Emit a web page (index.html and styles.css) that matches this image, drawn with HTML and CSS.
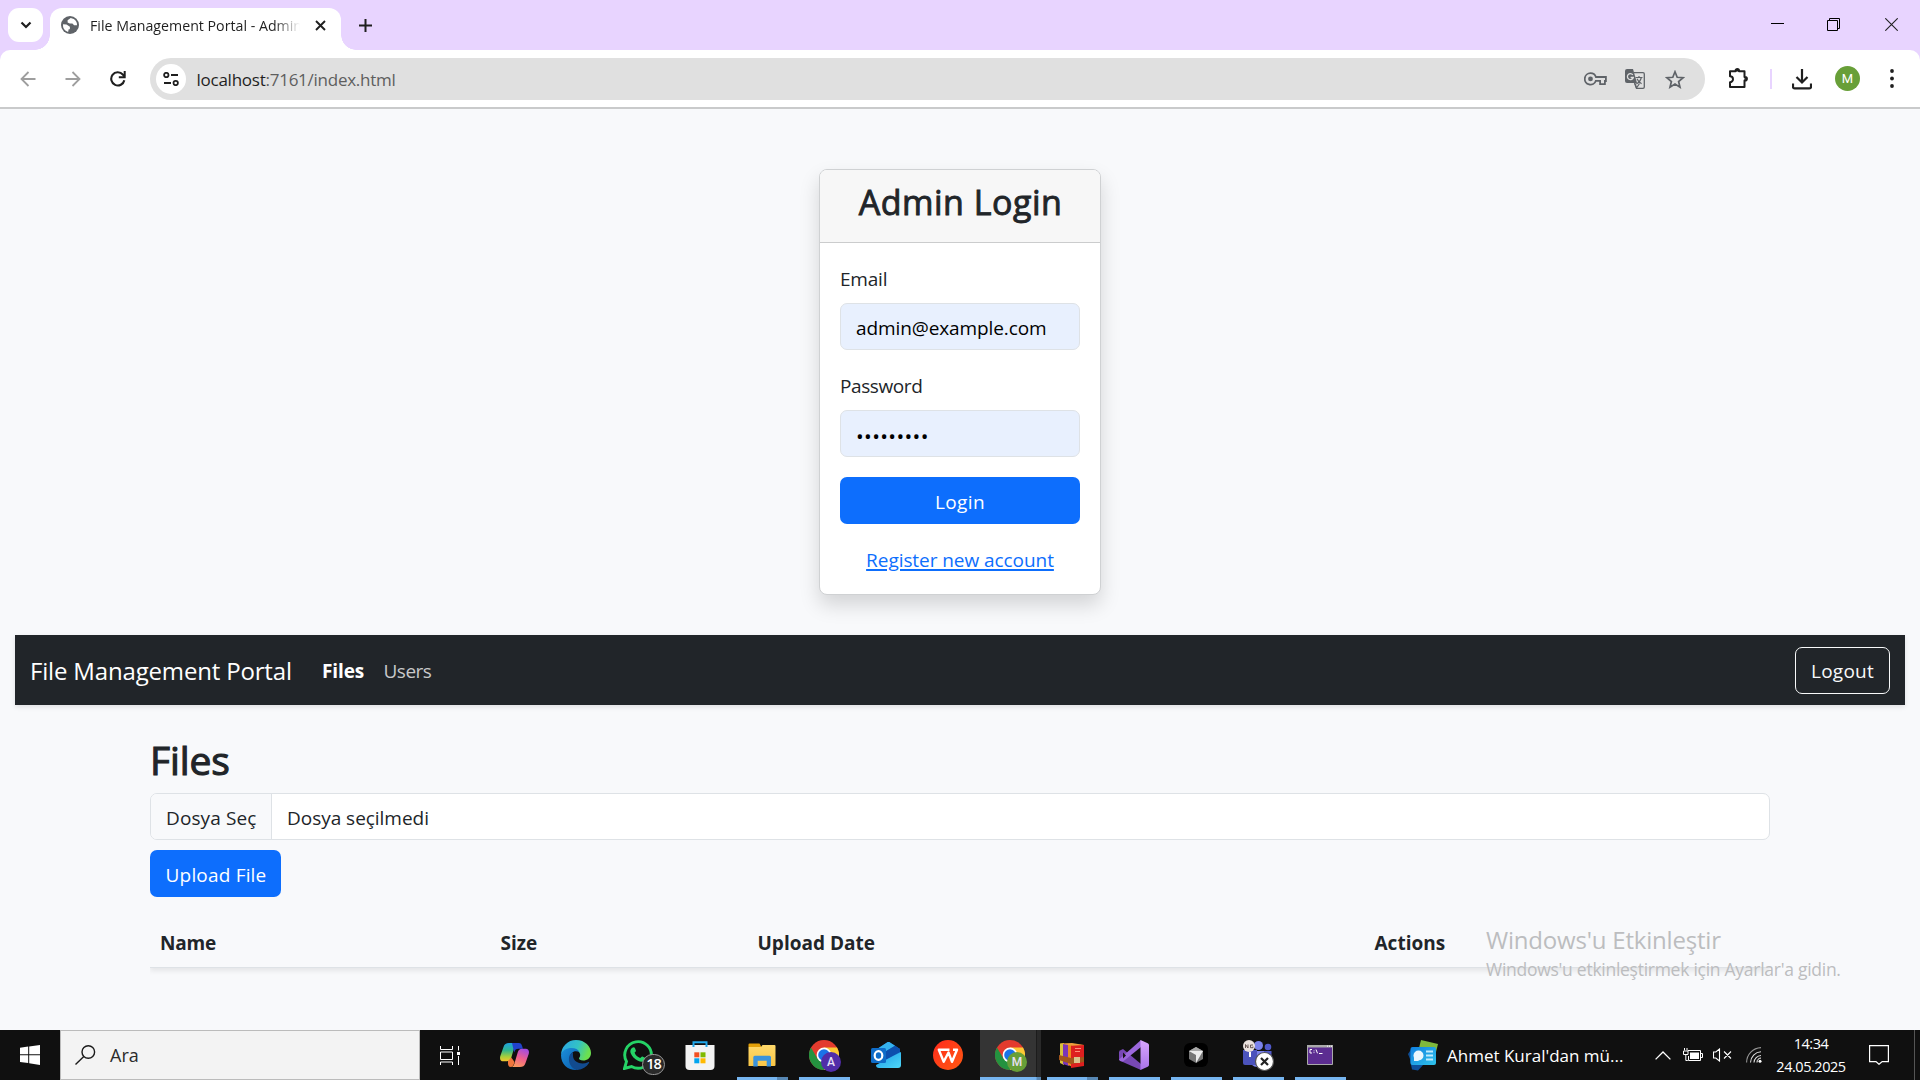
FILE: index.html
```html
<!DOCTYPE html>
<html lang="tr">
<head>
<meta charset="utf-8">
<title>File Management Portal - Admin</title>
<link rel="stylesheet" href="styles.css">
</head>
<body>
<svg class="defs" width="0" height="0" aria-hidden="true">
  <defs>
    <linearGradient id="cop1" x1="0" y1="0" x2="0" y2="1"><stop offset="0" stop-color="#1fa2e0"/><stop offset=".4" stop-color="#2fb58e"/><stop offset=".75" stop-color="#a8cf3a"/><stop offset="1" stop-color="#f5c52c"/></linearGradient>
    <linearGradient id="cop2" x1=".7" y1="0" x2=".3" y2="1"><stop offset="0" stop-color="#a44be0"/><stop offset=".5" stop-color="#ee5f8d"/><stop offset="1" stop-color="#fb9a5b"/></linearGradient>
    <linearGradient id="edge1" x1="0" y1="0" x2="1" y2=".3"><stop offset="0" stop-color="#2aa3e8"/><stop offset=".6" stop-color="#33c3c4"/><stop offset="1" stop-color="#6be04f"/></linearGradient>
    <linearGradient id="edge2" x1="0" y1="0" x2="1" y2="1"><stop offset="0" stop-color="#1b8fdc"/><stop offset="1" stop-color="#0b5cab"/></linearGradient>
    <linearGradient id="fold" x1="0" y1="0" x2="0" y2="1"><stop offset="0" stop-color="#ffd96b"/><stop offset="1" stop-color="#f9c646"/></linearGradient>
    <linearGradient id="wps" x1="0" y1="0" x2="1" y2="1"><stop offset="0" stop-color="#ff2a1c"/><stop offset="1" stop-color="#ff5a12"/></linearGradient>
    <linearGradient id="out" x1="0" y1="0" x2="1" y2="1"><stop offset="0" stop-color="#1b9be8"/><stop offset="1" stop-color="#4fd8f8"/></linearGradient>
    <linearGradient id="vs" x1="0" y1="0" x2="0" y2="1"><stop offset="0" stop-color="#d9a6ff"/><stop offset="1" stop-color="#a873e8"/></linearGradient>
    <linearGradient id="news" x1="0" y1="0" x2="1" y2="1"><stop offset="0" stop-color="#0f7fe0"/><stop offset="1" stop-color="#30c3ea"/></linearGradient>
    <symbol id="chrome" viewBox="0 0 30 30">
      <circle cx="15" cy="15" r="15" fill="#e33b2e"/>
      <path d="M15 15 8.500 18.750 2 7.500A15 15 0 0 0 15 30l6.500-11.250z" fill="#24923f"/>
      <path d="M15 15V7.500h13A15 15 0 0 1 15 30l6.500-11.250z" fill="#fcc934"/>
      <circle cx="15" cy="15" r="7.400" fill="#fff"/><circle cx="15" cy="15" r="5.800" fill="#1a73e8"/>
    </symbol>
  </defs>
</svg>

<header class="tabstrip">
  <div class="tabsearch"><svg width="12" height="8" viewBox="0 0 12 8"><path d="M1.500 1.500 6 6l4.500-4.500" fill="none" stroke="#1f1f1f" stroke-width="2.200"/></svg></div>
  <div class="tab">
    <svg width="18" height="18" viewBox="0 0 18 18"><circle cx="9" cy="9" r="9" fill="#5f6368"/><path d="M9.700 1.900 6.600 4.200v2.200l2.200 1.200h2.600l1.700 1.700h2.900a7 7 0 0 0-3.200-6.300zM2 8.300l3.500.2 3.400 2.200v2.500H7.700l-.6 2.700A7.200 7.200 0 0 1 2 8.300z" fill="#fff"/></svg>
    <span class="tab-title">File Management Portal - Admin</span>
    <svg class="tab-close" width="11" height="11" viewBox="0 0 11 11"><path d="m1 1 9 9m0-9-9 9" stroke="#1f1f1f" stroke-width="1.900"/></svg>
  </div>
  <svg class="newtab" width="13" height="13" viewBox="0 0 13 13"><path d="M6.500 0v13M0 6.500h13" stroke="#1f1f1f" stroke-width="2"/></svg>
  <div class="wincontrols">
    <svg width="13" height="13" viewBox="0 0 13 13"><path d="M0 5.500h13" stroke="#000"/></svg>
    <svg width="13" height="13" viewBox="0 0 13 13"><path d="M.5 2.500h10v10H.5zM2.500 2.500v-2h10v10h-2" fill="none" stroke="#000"/></svg>
    <svg width="13" height="13" viewBox="0 0 13 13"><path d="m.3.300 12.400 12.400m0-12.400L.3 12.700" stroke="#222" stroke-width="1.100"/></svg>
  </div>
</header>

<div class="toolbar-wrap">
<div class="toolbar">
  <div class="navicons">
    <svg width="16" height="16" viewBox="0 0 16 16"><path d="M15.500 8H2M8.500 1 1.500 8l7 7" fill="none" stroke="#9e9e9e" stroke-width="1.800"/></svg>
    <svg width="16" height="16" viewBox="0 0 16 16"><path d="M.5 8H14M7.500 1l7 7-7 7" fill="none" stroke="#9e9e9e" stroke-width="1.800"/></svg>
    <svg width="16" height="16" viewBox="0 0 16 16"><path d="M14.300 9.200A6.600 6.600 0 1 1 12.800 3.500L14.500 5.500" fill="none" stroke="#1f1f1f" stroke-width="2.100"/><path d="M14.700 0v6.200H8.800" fill="none" stroke="#1f1f1f" stroke-width="2"/></svg>
  </div>
  <div class="omnibox">
    <div class="siteinfo"><svg width="16" height="14" viewBox="0 0 16 14"><g fill="none" stroke="#1f1f1f" stroke-width="1.800"><circle cx="3.300" cy="3" r="2.200"/><path d="M8 3h7M1 11h7"/><circle cx="12.700" cy="11" r="2.200"/></g></svg></div>
    <span class="url"><b>localhost</b>:7161/index.html</span>
    <div class="omni-icons">
      <svg width="23" height="14" viewBox="0 0 23 14"><path d="M6.500 1.200a5.700 5.700 0 1 0 5.300 7.700h4.300v3.200h4.800V9h1V5h-10A5.700 5.700 0 0 0 6.500 1.200z" fill="none" stroke="#5f6368" stroke-width="1.800"/><circle cx="6.500" cy="6.900" r="2.400" fill="#5f6368"/></svg>
      <svg width="20" height="20" viewBox="0 0 20 20"><path d="M2 0h6l4 14H2a2 2 0 0 1-2-2V2a2 2 0 0 1 2-2z" fill="#5f6368"/><path d="M9 3.700h9a1.300 1.300 0 0 1 1.300 1.300v13a1.300 1.300 0 0 1-1.300 1.300h-6.500L9.500 14" fill="none" stroke="#5f6368" stroke-width="1.300"/><path d="M10.500 8.500h7M14 7v1.500m2.300 0c-.7 3-3 5.400-5 6.500m.7-5.200c1 2.300 2.700 4 4.600 5M10 14.500l1.500 4.500 3-4.500" fill="none" stroke="#5f6368" stroke-width="1.200"/><path d="M7.800 5.800A3 3 0 1 0 8.300 8.500H5.600" fill="none" stroke="#e0e0e0" stroke-width="1.300"/></svg>
      <svg width="20" height="19" viewBox="0 0 20 19"><path d="m10 1.800 2.200 5.500 5.900.4-4.500 3.800 1.400 5.700-5-3.100-5 3.100 1.400-5.700-4.500-3.800 5.900-.4z" fill="none" stroke="#5f6368" stroke-width="1.700"/></svg>
    </div>
  </div>
  <svg class="puzzle" width="21" height="21" viewBox="0 0 21 21"><path d="M2 3.300h5.600v-.6a1.700 1.700 0 0 1 3.400 0v.6h5.500v5.600h.6a1.800 1.800 0 0 1 0 3.600h-.6v6.400H2v-4.700a3 3 0 0 0 0-6z" fill="none" stroke="#1f1f1f" stroke-width="2" stroke-linejoin="round"/><path d="M7.600 3.500a1.700 2 0 0 1 3.400 0zM16.500 9a2 1.800 0 0 1 0 3.500z" fill="#1f1f1f"/></svg>
  <i class="divider"></i>
  <svg class="download" width="20" height="21" viewBox="0 0 20 21"><path d="M10 0v13M4.500 8 10 13.500 15.500 8M1 14.500v3.300a1.600 1.600 0 0 0 1.600 1.600h14.800a1.600 1.600 0 0 0 1.600-1.600v-3.300" fill="none" stroke="#1f1f1f" stroke-width="2.200"/></svg>
  <div class="avatar">M</div>
  <svg class="menu" width="4" height="19" viewBox="0 0 4 19"><g fill="#1f1f1f"><circle cx="2" cy="2" r="1.900"/><circle cx="2" cy="9.500" r="1.900"/><circle cx="2" cy="17" r="1.900"/></g></svg>
</div>
</div>

<main class="page">
  <section class="card">
    <div class="card-header"><h3>Admin Login</h3></div>
    <div class="card-body">
      <label class="l-email">Email</label>
      <div class="field"><span class="v-email">admin@example.com</span></div>
      <label class="l-pass">Password</label>
      <div class="field"><span class="v-dots">•••••••••</span></div>
      <button class="btn btn-login"><span>Login</span></button>
      <a class="register">Register new account</a>
    </div>
  </section>

  <nav class="navbar">
    <span class="brand">File Management Portal</span>
    <span class="nav-files">Files</span>
    <span class="nav-users">Users</span>
    <button class="logout"><span>Logout</span></button>
  </nav>

  <section class="files">
    <h2>Files</h2>
    <div class="filebox"><div class="choose"><span>Dosya Seç</span></div><div class="nofile"><span>Dosya seçilmedi</span></div></div>
    <button class="btn btn-upload"><span>Upload File</span></button>
    <div class="table-head">
      <span class="th1">Name</span><span class="th2">Size</span><span class="th3">Upload Date</span><span class="th4">Actions</span>
    </div>
  </section>
  <div class="watermark"><div class="wm1">Windows'u Etkinleştir</div><div class="wm2">Windows'u etkinleştirmek için Ayarlar'a gidin.</div></div>
</main>

<footer class="taskbar">
  <div class="start"><svg width="20" height="20" viewBox="0 0 20 20"><path d="M0 2.700 8.200 1.600v7.700H0zM9.200 1.400 20 0v9.300H9.200zM0 10.300h8.200V18L0 17zM9.200 10.300H20V20L9.200 18.300z" fill="#fff"/></svg></div>
  <div class="search">
    <svg width="21" height="20" viewBox="0 0 21 20"><g fill="none" stroke="#1a1a1a" stroke-width="1.400"><circle cx="13.300" cy="7" r="6.300"/><path d="M8.800 11.500.5 19.500"/></g></svg>
    <span class="ara">Ara</span>
  </div>
  <div class="taskview"><svg width="20" height="19" viewBox="0 0 20 19"><path d="M.5 0v3.500h12V0M.5 6h12v7.500H.5zM.5 19v-3h12v3M18.500 0v4.500M18.500 10v9" fill="none" stroke="#fff"/><path d="M17 6h3v3h-3z" fill="#fff"/></svg></div>
  <div class="apps">
    <div class="app"><svg width="29" height="26" viewBox="0 0 29 26"><path d="M9 1h9.500c-2 0-3.200 1-4 3.800L11.300 15.500c-.8 2.700-2 3.800-4.300 3.800H3.300C.5 19.300-.5 17 .3 14L3.500 5C4.500 2 6 1 9 1z" fill="url(#cop1)"/><path d="M12 1h6.800c2 0 2.700 1 3.300 3l.8 2.700h-4.400c-2.500 0-3.500 1-4.300 3.800z" fill="#2142cc"/><path d="M19.800 25H10.500c2 0 3.200-1 4-3.800l3.200-10.700c.8-2.700 2-3.800 4.300-3.800h3.700c2.800 0 3.800 2.300 3 5.300L25.500 21c-1 3-2.700 4-5.700 4z" fill="url(#cop2)"/><path d="m8 19 3.300-3.500L14.500 20c-.8 3.500-2 5-4 5-1.700 0-2-1-2.500-3z" fill="#f0763c"/></svg></div>
    <div class="app"><svg width="30" height="30" viewBox="0 0 30 30"><path d="M0 15A15 15 0 0 1 15 0c9 0 15 6.500 15 13 0 5-4 7.500-7.700 7.500-3 0-4.500-1-4.300-2.200.1-.8 1.200-1.200 1.200-3.300 0-3-3-5.500-7-5.500C6 9.500 2 11 0 15z" fill="url(#edge1)"/><path d="M0 15c1-4.500 5.500-7 10.500-7 4 0 6.500 1.500 8 4-6-2-9 1-9.500 5-.5 5 3 9.500 7 13h-1C6.500 30 0 24 0 15z" fill="url(#edge2)"/><path d="M12 12c-2.700 1.200-4.300 4-4.100 7.500.3 6 4.600 10.200 8.600 10.500 5-.5 9-3 11.500-7 .5-.8-.3-1.200-1-.8-6 2.800-14.500.7-15-6.200-.1-1.500 0-2.500 0-4z" fill="#124b8f"/></svg></div>
    <div class="app whatsapp"><svg width="30" height="30" viewBox="0 0 30 30"><path d="M1.500 28.500 3.500 21.500A13.300 13.300 0 1 1 8.500 26.500z" fill="none" stroke="#25d366" stroke-width="2.900"/><path d="M9.300 7.800c1-1 2.200-.8 2.600.2l1 2.400c.3.900-1 1.600-1.300 2.300.9 2.300 3 4.300 5.500 5.300.7-.2 1.500-1.800 2.300-1.500l2.600 1.300c.8.500.3 2.300-.6 3-1.700 1.300-3.800 1.200-6.400 0-3.500-1.700-6.200-4.500-7.400-7.700-.7-2.200 0-4.100 1.700-5.300z" fill="#25d366"/></svg><b class="badge">18</b></div>
    <div class="app"><svg width="30" height="30" viewBox="0 0 30 30"><path d="M.5 5h29v21a4 4 0 0 1-4 4h-21a4 4 0 0 1-4-4z" fill="#f3f3f3"/><path d="M8.500 7V2.200h13V7" fill="none" stroke="#20a8ec" stroke-width="2"/><path d="M9.300 12.300h5v5h-5z" fill="#f25022"/><path d="M15.500 12.300h5v5h-5z" fill="#7fba00"/><path d="M9.300 18.300h5v5h-5z" fill="#00a4ef"/><path d="M15.500 18.300h5v5h-5z" fill="#ffb900"/></svg></div>
    <div class="app run split"><svg width="28" height="24" viewBox="0 0 28 24"><path d="M.5 1.500A1 1 0 0 1 1.500.5h10L13.500 4h-13z" fill="#e3a008"/><path d="M.5 4H13l1.500-2h12a1 1 0 0 1 1 1v19a1 1 0 0 1-1 1H.5z" fill="url(#fold)"/><path d="M5.300 23.500v-9.300a1.500 1.500 0 0 1 1.500-1.500h14.700a1.500 1.500 0 0 1 1.500 1.500v9.300h-4.300v-5.700h-9v5.700z" fill="#3b93dc"/></svg></div>
    <div class="app run"><svg width="30" height="30"><use href="#chrome"/></svg><b class="prof prof-a">A</b></div>
    <div class="app"><svg width="30" height="26" viewBox="0 0 30 26"><path d="M3 9 16 .5c1-.6 2-.6 3 0L29 7v5L14 20z" fill="#1470c8"/><path d="M6 7 16 .5c1-.6 2-.6 3 0L24 3.700 12 11z" fill="#35b2ee"/><path d="m12 11 12-7.300 5 3.300v3L15 18z" fill="#0d4fae"/><path d="M30 10v13a3 3 0 0 1-3 3H8a3 3 0 0 1-3-3l17-9z" fill="url(#out)"/><rect y="6" width="15" height="15" rx="1.500" fill="#0f6cc8"/><ellipse cx="7.500" cy="13.500" rx="3.800" ry="4.300" fill="none" stroke="#fff" stroke-width="2.200"/></svg></div>
    <div class="app"><svg width="30" height="30" viewBox="0 0 30 30"><circle cx="15" cy="15" r="15" fill="url(#wps)"/><path d="M16.500 9.700H5.800l4.900 12.100 4.800-9.300 3.500 9.300 5-12.100h-4" fill="none" stroke="#fff" stroke-width="2.400" stroke-linejoin="round"/></svg></div>
    <div class="app run active"><svg width="30" height="30"><use href="#chrome"/></svg><b class="prof prof-m">M</b></div>
    <div class="app run split"><svg width="26" height="25" viewBox="0 0 26 25"><path d="M1 .5 5 0v22L1 20z" fill="#d9c23a"/><path d="M4 1h6v22l-6-2z" fill="#7b35b8"/><path d="M9 1h5v23l-5-2z" fill="#eb8a1f"/><path d="m12 1 13 1v21l-13 2z" fill="#de1f1f"/><path d="M1 .5 13 0l12 2-12 .8z" fill="#f0a03c"/><path d="M16 5.500h6M16 8.500h5" stroke="#ff8f7a"/><path d="m0 12 12 3 13-1v5l-13 2-12-4z" fill="#a3561b"/><path d="M15 14h6v6h-6z" fill="#d9c38c"/></svg></div>
    <div class="app run"><svg width="30" height="30" viewBox="0 0 30 30"><path d="M1 10.500 4 9l18 15v6L1.500 21 0 19.500v-8z" fill="#7848b5"/><path d="m0 19.500 22-19.500v7L4 21.500 1 21z" fill="#9c68dc"/><path d="m4 12.500 3 3-3 3z" fill="#101010"/><path d="m21.500 0 7.200 3.200A2 2 0 0 1 30 5v20a2 2 0 0 1-1.300 1.800L21.500 30z" fill="url(#vs)"/></svg></div>
    <div class="app run"><svg width="24" height="24" viewBox="0 0 24 24"><rect width="24" height="24" rx="6" fill="#000"/><path d="m12 4 7 4v8l-7 4-7-4V8z" fill="#777"/><path d="m5 8 7-4 7 4-7 3z" fill="#a8a8a8"/><path d="M5 8h14l-7 12v-8z" fill="#ededed"/></svg></div>
    <div class="app run"><svg width="32" height="32" viewBox="0 0 32 32"><circle cx="16.500" cy="6.500" r="4.500" fill="#7b83eb"/><circle cx="26" cy="8" r="3.300" fill="#5059c9"/><path d="M21 12h8.500v11H21z" fill="#5059c9"/><path d="M8 12h14v9a7 7 0 0 1-14 0z" fill="#7b83eb"/><path d="M1 11h14v15H3a2 2 0 0 1-2-2z" fill="#4b53bc"/><path d="M8 13v5" stroke="#fff" stroke-width="2"/><circle cx="7" cy="7" r="6" fill="#eae1dd"/><path d="M3.500 9V5.500L6 9V5.500M11 6H8.500v2.700H11V7.500" fill="none" stroke="#5a4a45" stroke-width=".9"/><circle cx="22.500" cy="22.500" r="9" fill="#fff" stroke="#555" stroke-width="1.200"/><path d="m19 19 7 7m0-7-7 7" stroke="#222" stroke-width="2.200"/></svg></div>
    <div class="app run"><svg width="26" height="20" viewBox="0 0 26 20"><path d="M.5.500h25v19H.5z" fill="#5c2d91" stroke="#aaa"/><path d="M0 0h26v2.500H0z" fill="#aaa"/><path d="M20 1.200h1m1 0h1m1 0h1" stroke="#fff"/><path d="M5 4.500H3v3.500h2M7 5.500v.8m0 1v.8M9 4.500l1.500 3.800M12 8.500h3.500" fill="none" stroke="#fff"/></svg></div>
  </div>
  <div class="news"><svg width="30" height="31" viewBox="0 0 30 31"><path d="m13 0 17 4-3 12-17-4z" fill="#7fb93c"/><path d="m2 20 14 4-6 6.500-6-1z" fill="#0d4f9a"/><path d="m0 14 4-6v16z" fill="#0e4d94"/><rect x="2.500" y="7" width="25.500" height="18" rx="2" fill="url(#news)"/><circle cx="10.500" cy="15.500" r="5" fill="#e9f6fd"/><path d="M6 16v5h5z" fill="#e9f6fd"/><path d="M18 11.500h7M18 15.500h7M18 19.500h7" stroke="#bfeafb" stroke-width="1.800"/></svg><span class="newstext">Ahmet Kural'dan mü...</span></div>
  <div class="tray">
    <svg class="chev" width="16" height="9" viewBox="0 0 16 9"><path d="m.6 8.400 7.400-7.400 7.400 7.400" fill="none" stroke="#fff" stroke-width="1.300"/></svg>
    <svg class="bat" width="20" height="14" viewBox="0 0 20 14"><path d="M5 2.500h12.500v10h-12V8M18 5.500h1.500v4H18M1.500 0v2.500M4 0v2.500M.5 3h4.500v3.500H.5zM2.800 6.500v6h2" fill="none" stroke="#fff"/><path d="M7 4.500h9v6.500H7z" fill="#fff"/></svg>
    <svg class="vol" width="19" height="14" viewBox="0 0 19 14"><path d="M.5 4v6h2.300l3.700 3V1L2.800 4zM11 3.500l7 7m0-7-7 7" fill="none" stroke="#fff" stroke-width="1.100"/></svg>
    <svg class="wifi" width="16" height="16" viewBox="0 0 16 16"><g fill="none" stroke="#ddd" stroke-width="1.100"><path d="M.6 15.500A15 15 0 0 1 15 .6" opacity=".65"/><path d="M4.500 15.500A11 11 0 0 1 15 4.800M8 15.500A7.500 7.500 0 0 1 15 8.500"/></g><path d="M11 15.500a4.500 4.500 0 0 1 4-4.500" fill="none" stroke="#fff"/><circle cx="14" cy="14.300" r="1.500" fill="#fff"/></svg>
    <div class="clock"><span class="time">14:34</span><span class="date">24.05.2025</span></div>
    <svg class="notif" width="20" height="20" viewBox="0 0 20 20"><path d="M.6.600h18.800v16h-6.200L10 19.300l-3-2.700H.6z" fill="none" stroke="#fff" stroke-width="1.200"/></svg>
  </div>
  <i class="desk"></i>
</footer>
</body>
</html>
```
FILE: styles.css
```css
* { box-sizing: border-box; margin: 0; padding: 0; }
body { width: 1920px; height: 1080px; overflow: hidden; display: flex; flex-direction: column; background: #f8f9fb; color: #212529; font-family: "Open Sans", "Noto Sans", sans-serif; font-size: 19px; line-height: 30px; }
svg { display: block; flex: none; }
span { white-space: nowrap; }
button { font: inherit; border: 0; }
.defs { position: absolute; }

.tabstrip { height: 50px; flex: none; background: #e8d4ff; display: flex; align-items: flex-start; padding: 8px 22px 0 8px; }
.tabsearch { width: 35px; height: 34px; border-radius: 11px; background: #fff; display: flex; align-items: center; justify-content: center; margin-right: 7px; }
.tab { position: relative; width: 291px; height: 42px; background: #fff; border-radius: 12px 12px 0 0; display: flex; align-items: center; padding: 0 15px 8px 11px; }
.tab::before, .tab::after { content: ""; position: absolute; bottom: 0; width: 15px; height: 15px; }
.tab::before { left: -15px; background: radial-gradient(circle at 0 0, transparent 14.500px, #fff 15px); }
.tab::after { right: -15px; background: radial-gradient(circle at 100% 0, transparent 14.500px, #fff 15px); }
.tab-title { width: 217px; margin-left: 11px; padding-top: 1px; font-size: 14.200px; color: #1f1f1f; -webkit-mask-image: linear-gradient(90deg, #000 184px, transparent 210px); mask-image: linear-gradient(90deg, #000 184px, transparent 210px); }
.tab-close { margin-left: auto; }
.newtab { margin: 11px 0 0 18px; }
.wincontrols { margin: 10px 0 0 auto; display: flex; gap: 45px; }
.wincontrols svg:first-child { margin-right: -2px; }

.toolbar-wrap { height: 59px; flex: none; background: #e8d4ff; }
.toolbar { height: 59px; background: #fff; border-radius: 10px 10px 0 0; border-bottom: 2px solid #c9cacb; display: flex; align-items: center; padding: 0 26px 0 20px; }
.navicons { display: flex; gap: 29px; width: 130px; }
.omnibox { width: 1555px; height: 42px; border-radius: 21px; background: #e0e0e0; display: flex; align-items: center; padding: 0 20px 0 6px; }
.siteinfo { width: 30px; height: 30px; border-radius: 50%; background: #fff; display: flex; align-items: center; justify-content: center; }
.url { margin-left: 10.500px; padding-top: 2px; font-size: 17px; letter-spacing: -.25px; color: #5e5e5e; }
.url b { font-weight: 400; color: #1f1f1f; }
.omni-icons { margin-left: auto; padding-top: 1px; display: flex; align-items: center; gap: 19px; }
.omni-icons svg:nth-child(2) { margin: 0 1px 0 -1px; }
.puzzle { margin-left: 23px; }
.divider { width: 2px; height: 20px; background: #e8d4ff; margin-left: 21px; }
.download { margin: 1px 0 0 20px; }
.avatar { width: 25px; height: 25px; border-radius: 50%; background: #689f38; color: #fff; font: 13px/25px Roboto, sans-serif; text-align: center; margin-left: 23px; }
.menu { margin-left: auto; }

.page { position: relative; height: 921px; flex: none; padding: 60px 15px 0; display: flex; flex-direction: column; }
.card { width: 282px; height: 426px; align-self: center; border: 1px solid #cfd1d3; border-radius: 8px; background: #fff; box-shadow: 0 10px 20px rgba(0,0,0,.15); overflow: hidden; }
.card-header { height: 73px; background: #f7f7f7; border-bottom: 1px solid #cbcccd; text-align: center; }
h3 { font-size: 34px; font-weight: 400; -webkit-text-stroke: .9px #212529; letter-spacing: .5px; line-height: 42px; padding: 11px 0 0 1px; }
.card-body { padding: 21px 20px 0; display: flex; flex-direction: column; }
.card-body label { height: 30px; margin-bottom: 9px; }
.l-email { letter-spacing: -.2px; }
.l-pass { letter-spacing: -.4px; }
.v-email { letter-spacing: -.1px; }
.v-dots { display: block; padding-top: 1px; font-size: 20.500px; letter-spacing: .38px; }
.field { height: 47px; border: 1px solid #dee2e6; border-radius: 7px; background: #e8f0fe; padding: 9px 15px 0; margin-bottom: 21px; color: #000; line-height: 30px; }
.field:nth-of-type(2) { margin-bottom: 20px; }
.btn { height: 47px; border-radius: 7px; background: #0d6efd; color: #fff; text-align: center; line-height: 30px; padding-top: 2px; }
.btn-login { letter-spacing: .35px; }
.register { align-self: center; margin-top: 21px; letter-spacing: -.06px; color: #0d6efd; text-decoration: underline; text-underline-offset: 2px; text-decoration-thickness: 2px; }

.navbar { height: 70px; margin-top: 40px; background: #212529; color: #fff; box-shadow: 0 2px 5px rgba(0,0,0,.1); display: flex; align-items: center; padding: 2px 15px 0; }
.brand { font-size: 24px; letter-spacing: -.17px; width: 292px; }
.nav-files { font-weight: 700; width: 61.500px; letter-spacing: -.1px; }
.nav-users { color: #c8c9ca; letter-spacing: -.5px; }
.logout { margin: -2px 0 0 auto; width: 95px; height: 47px; padding-top: 2px; border: 1px solid #f8f9fa; border-radius: 7px; background: none; color: #f8f9fa; letter-spacing: .25px; }

.files { margin: 30px 135px 0; display: flex; flex-direction: column; }
h2 { font-size: 39px; font-weight: 400; -webkit-text-stroke: 1.100px #212529; letter-spacing: -.1px; line-height: 48px; height: 58px; padding-top: 1px; }
.filebox { height: 47px; border: 1px solid #dee2e6; border-radius: 7px; background: #fff; display: flex; overflow: hidden; line-height: 47px; }
.choose { width: 121px; padding-left: 15px; background: #f8f9fb; border-right: 1px solid #dee2e6; letter-spacing: .1px; }
.choose span, .nofile span { display: block; padding-top: 1px; }
.nofile { padding-left: 15px; letter-spacing: -.03px; }
.btn-upload { width: 131px; margin-top: 10px; padding-left: 1px; letter-spacing: .18px; }
.table-head { margin-top: 20px; height: 51px; border-bottom: 1px solid #dee2e6; box-shadow: 0 3px 5px rgba(0,0,0,.08); clip-path: inset(0 0 -10px 0); display: grid; grid-template-columns: 340.500px 257px 617px 1fr; padding: 11px 10px 0; font-weight: 700; }
.th1 { letter-spacing: -.19px; }
.watermark { position: absolute; left: 1486px; top: 813px; color: #bcbdbf; }
.wm1 { font-size: 24px; line-height: 36px; letter-spacing: -.2px; }
.wm2 { margin-top: -1px; font-size: 17.500px; line-height: 24px; letter-spacing: -.27px; }

.taskbar { height: 50px; flex: none; background: #101010; color: #fff; display: flex; align-items: center; }
.start { width: 60px; display: flex; justify-content: center; }
.search { width: 360px; height: 50px; background: #f3f3f3; border: 1px solid #bbb; display: flex; align-items: center; padding-left: 14px; }
.ara { color: #2b2b2b; margin-left: 14px; font-size: 18px; }
.taskview { width: 63px; padding-left: 20px; }
.apps { display: flex; width: 925px; }
.app { position: relative; width: 62px; height: 50px; display: flex; align-items: center; justify-content: center; }
.app > svg { position: relative; }
.run::after { content: ""; position: absolute; left: 6px; bottom: 0; width: 51px; height: 3px; background: #76b5f0; }
.split::after { background: linear-gradient(90deg, #76b5f0 40px, #5787b3 40px); }
.active::before { content: ""; position: absolute; left: 1px; top: 0; width: 61px; height: 50px; background: linear-gradient(90deg, #343434 56px, #1c1c1c 56px, #1c1c1c 57px, #292929 57px); }
.active::after { left: 1px; width: 61px; background: linear-gradient(90deg, #76b5f0 56px, #5787b3 57px); }
.badge { position: absolute; left: 35px; top: 24px; width: 23px; height: 21px; border: 1px solid #999; border-radius: 11px; background: #2a2a2a; font: 600 14.500px/18px "Open Sans", sans-serif; letter-spacing: -1px; text-align: center; }
.prof { position: absolute; left: 28px; top: 22px; width: 20px; height: 20px; border-radius: 50%; font: 500 12px/20px Roboto, sans-serif; text-align: center; color: #e8e0f5; }
.prof-a { background: #512da8; }
.prof-m { background: #689f38; }
.news { width: 247px; display: flex; align-items: center; }
.newstext { margin-left: 9px; padding-top: 1px; font-size: 17px; }
.tray { flex: 1; display: flex; align-items: center; }
.bat { margin-left: 12px; }
.vol { margin-left: 10px; }
.wifi { margin-left: 14px; }
.clock { width: 98px; display: flex; flex-direction: column; align-items: center; font-size: 14.500px; line-height: 23px; letter-spacing: -.46px; }
.notif { margin-left: 9px; }
.desk { width: 6px; height: 50px; border-left: 1px solid #555; }
```
